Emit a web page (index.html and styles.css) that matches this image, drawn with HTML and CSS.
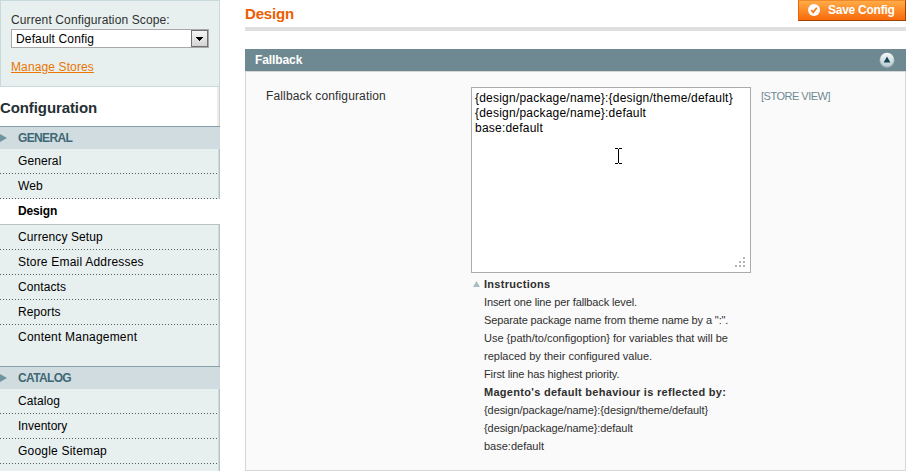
FILE: index.html
```html
<!DOCTYPE html>
<html lang="en">
<head>
<meta charset="utf-8">
<title>Configuration</title>
<link rel="stylesheet" href="styles.css">
</head>
<body>
<div class="page">
  <aside class="sidebar">
    <section class="scope">
      <label class="scope-label">Current Configuration Scope:</label>
      <div class="select"><span class="select-value">Default Config</span><span class="select-button"><svg width="7" height="4" shape-rendering="crispEdges"><path d="M0 0H7V1H6V2H5V3H4V4H3V3H2V2H1V1H0Z"/></svg></span></div>
      <a class="scope-link">Manage Stores</a>
    </section>
    <h3 class="side-title">Configuration</h3>
    <nav class="menu">
      <div class="group"><svg class="arrow" width="7" height="8"><path d="M0 0L7 4L0 8Z"/></svg><span>GENERAL</span></div>
      <ul class="list">
        <li>General</li>
        <li>Web</li>
        <li class="active">Design</li>
        <li>Currency Setup</li>
        <li class="wide">Store Email Addresses</li>
        <li>Contacts</li>
        <li>Reports</li>
        <li class="last wide">Content Management</li>
      </ul>
      <div class="group"><svg class="arrow" width="7" height="8"><path d="M0 0L7 4L0 8Z"/></svg><span>CATALOG</span></div>
      <ul class="list">
        <li>Catalog</li>
        <li class="snug">Inventory</li>
        <li class="wide">Google Sitemap</li>
        <li></li>
      </ul>
    </nav>
  </aside>
  <main class="content">
    <header class="content-header">
      <h3 class="title">Design</h3>
      <button class="save"><svg width="12" height="12" viewBox="0 0 12 12"><circle cx="6" cy="6" r="6" fill="#fff"/><path d="M3.2 6L5.2 8.3L8.8 3.7" fill="none" stroke="#f27a1c" stroke-width="1.8"/></svg><span>Save Config</span></button>
    </header>
    <div class="section-head"><span>Fallback</span>
      <svg width="16" height="16" viewBox="0 0 16 16"><defs><linearGradient id="g" x2="0" y2="1"><stop stop-color="#f4f8f8"/><stop offset="1" stop-color="#bccdd1"/></linearGradient></defs><circle cx="8" cy="8.3" r="7.5" fill="#9db3ba"/><circle cx="8" cy="7.6" r="6.8" fill="url(#g)"/><path d="M8 4.5L11.3 10.5H4.7Z" fill="#164454"/></svg>
    </div>
    <div class="fieldset">
      <div class="label">Fallback configuration</div>
      <div class="value">
        <div class="textarea">
          <div>{design/package/name}:{design/theme/default}</div>
          <div>{design/package/name}:default</div>
          <div>base:default</div>
          <svg class="cursor" width="7" height="16" shape-rendering="crispEdges"><path d="M0 0H3V1H4V0H7V1H4V15H7V16H4V15H3V16H0V15H3V1H0Z"/></svg>
          <svg class="grip" width="10" height="10" shape-rendering="crispEdges"><path d="M8 0h2v2h-2zM4 4h2v2h-2zM8 4h2v2h-2zM0 8h2v2h-2zM4 8h2v2h-2zM8 8h2v2h-2z"/></svg>
        </div>
        <div class="note">
          <svg class="note-mark" width="7" height="6"><path d="M3.5 0L7 6H0Z"/></svg>
          <div class="strong">Instructions</div>
          <div class="tight">Insert one line per fallback level.</div>
          <div class="tight">Separate package name from theme name by a ":".</div>
          <div>Use {path/to/configoption} for variables that will be</div>
          <div>replaced by their configured value.</div>
          <div class="tight">First line has highest priority.</div>
          <div class="strong">Magento's default behaviour is reflected by:</div>
          <div class="path">{design/package/name}:{design/theme/default}</div>
          <div class="path">{design/package/name}:default</div>
          <div>base:default</div>
        </div>
      </div>
      <div class="hint">[STORE VIEW]</div>
    </div>
  </main>
</div>
</body>
</html>
```
FILE: styles.css
```css
* { box-sizing: border-box; }
body { margin: 0; background: #fff; color: #2f2f2f; font: 12px/15px "Liberation Sans", Arial, sans-serif; }
svg { display: block; flex: none; }
.page { display: flex; width: 906px; height: 471px; overflow: hidden; }
.sidebar { width: 220px; flex: none; white-space: nowrap; }
.scope { height: 87px; padding: 12px 10px 0; background: #e7efef; border: 1px solid #c9dadd; }
.scope-label { display: block; height: 16px; letter-spacing: .12px; }
.select { display: flex; width: 198px; height: 19px; background: #fff; border: 1px solid #a9a9a9; color: #000; }
.select-value { flex: 1; padding: 2px 0 0 4px; letter-spacing: .15px; }
.select-button { width: 17px; height: 17px; display: grid; place-items: center; background: linear-gradient(#f5f5f5, #d4d4d4); border: 1px solid #707070; }
.scope-link { display: block; margin-top: 12px; color: #ea7601; text-decoration: underline; letter-spacing: .12px; }
.side-title { margin: 0; height: 39px; padding-top: 12px; font-size: 15px; line-height: 18px; letter-spacing: -.1px; box-shadow: inset -1px 0 #d0d0d0, inset -3px 0 #ededed; color: #253033; }
.menu { background: #e7efef; color: #000; }
.group { display: flex; align-items: center; height: 23px; border-top: 1px solid #84a0a8; background: #d0dcdf; color: #3f6876; font-weight: bold; letter-spacing: -.65px; }
.arrow { fill: #6f93a0; margin-right: 11px; }
.list { margin: 0; padding: 0; list-style: none; }
.list li { height: 25px; padding: 5px 0 0 18px; letter-spacing: .1px; background: repeating-linear-gradient(90deg, #555c5c 0 1px, transparent 1px 3px) 0 100% / 100% 1px no-repeat; box-shadow: inset -1px 0 #b0c3c8, inset -2px 0 #cfdcde; }
.list .wide { letter-spacing: .21px; }
.list .snug { letter-spacing: 0; }
.list li.active { height: 26px; background: #fff; box-shadow: none; font-weight: bold; letter-spacing: -.15px; border-bottom: 1px solid #b8c4c2; }
.list li.last { height: 41px; background: none; }
.content { width: 661px; margin-left: 25px; }
.content-header { display: flex; justify-content: space-between; height: 31px; border-bottom: 4px solid #dfdfdf; }
.title { margin: 5px 0 0; color: #eb5e00; font-size: 15px; line-height: 18px; letter-spacing: -.15px; }
.save { display: flex; align-items: center; width: 108px; height: 21px; padding: 0 0 1px 9px; gap: 8px; border: 1px solid #ed6502; border-top-color: #f28a2b; border-right-color: #a04300; border-bottom-color: #a04300; background: linear-gradient(#ffac47, #f9690a); color: #fff; font: bold 12px/15px "Liberation Sans", Arial, sans-serif; letter-spacing: -.25px; white-space: nowrap; }
.section-head { display: flex; align-items: center; justify-content: space-between; height: 22px; margin-top: 18px; padding: 0 11px 0 10px; background: #6f8992; color: #fff; font-weight: bold; letter-spacing: -.1px; }
.fieldset { display: flex; height: 400px; border: 1px solid #d6d6d6; background: #fafafa; padding: 15px 0 0 20px; white-space: nowrap; }
.label { width: 205px; padding-top: 2px; letter-spacing: .14px; }
.value { width: 280px; }
.textarea { position: relative; height: 186px; padding: 3px; background: #fff; border: 1px solid #aaa; color: #000; letter-spacing: .22px; }
.cursor { position: absolute; left: 143px; top: 60px; }
.grip { position: absolute; right: 5px; bottom: 5px; fill: #b4b4b4; }
.note { position: relative; padding: 2px 0 0 13px; font-size: 11px; line-height: 18px; }
.note .strong { font-weight: bold; letter-spacing: .29px; }
.note .tight { letter-spacing: -.12px; }
.note .path { letter-spacing: -.08px; }
.note-mark { position: absolute; left: 2px; top: 8px; fill: #a9bcc3; }
.hint { margin: 2px 0 0 10px; color: #6f8992; font-size: 11px; letter-spacing: -.5px; }
```
